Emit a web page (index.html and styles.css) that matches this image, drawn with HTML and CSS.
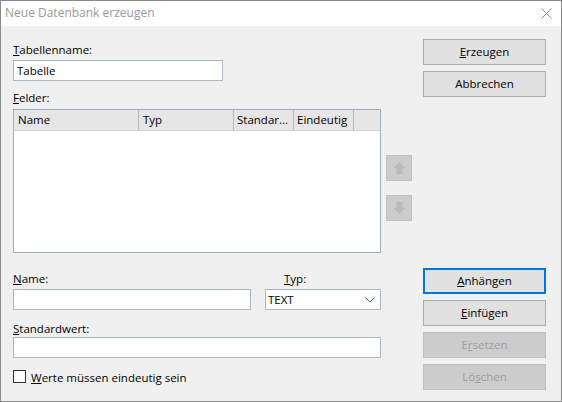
FILE: index.html
```html
<!DOCTYPE html>
<html>
<head>
<meta charset="utf-8">
<link rel="stylesheet" href="styles.css">
</head>
<body>
<div class="window">
  <div class="titlebar">
    <span class="title">Neue Datenbank erzeugen</span>
    <svg class="close" width="11" height="11" viewBox="0 0 11 11"><path d="M0.5 0.5 L10.5 10.5 M10.5 0.5 L0.5 10.5" stroke="#8c8c8c" stroke-width="1" fill="none"/></svg>
  </div>
  <div class="dialog">
    <div class="left">
      <div class="label"><u>T</u>abellenname:</div>
      <div class="input tabname">Tabelle</div>
      <div class="label felder"><u>F</u>elder:</div>
      <div class="list">
        <div class="list-head">
          <div class="col c-name">Name</div>
          <div class="col c-typ">Typ</div>
          <div class="col c-std">Standar...</div>
          <div class="col c-eind">Eindeutig</div>
        </div>
      </div>
      <div class="row name-row">
        <div class="name-col">
          <div class="label"><u>N</u>ame:</div>
          <div class="input"></div>
        </div>
        <div class="typ-col">
          <div class="label typ-label"><u>T</u>yp:</div>
          <div class="input combo"><span>TEXT</span>
            <svg width="10" height="6" viewBox="0 0 10 6"><path d="M0.5 0.5 L5 5 L9.5 0.5" stroke="#5a5a5a" stroke-width="1" fill="none"/></svg>
          </div>
        </div>
      </div>
      <div class="label std-label"><u>S</u>tandardwert:</div>
      <div class="input"></div>
      <div class="check-row">
        <span class="checkbox"></span>
        <span class="check-label"><u>W</u>erte müssen eindeutig sein</span>
      </div>
    </div>
    <div class="arrows">
      <div class="arrow-btn">
        <svg width="13" height="12" viewBox="0 0 13 12"><path d="M6.5 0 L12.5 6 L9.5 6 L9.5 12 L3.5 12 L3.5 6 L0.5 6 Z" fill="#bababa"/></svg>
      </div>
      <div class="arrow-btn">
        <svg width="13" height="12" viewBox="0 0 13 12"><path d="M6.5 12 L12.5 6 L9.5 6 L9.5 0 L3.5 0 L3.5 6 L0.5 6 Z" fill="#bababa"/></svg>
      </div>
    </div>
    <div class="right">
      <div class="btn"><u>E</u>rzeugen</div>
      <div class="btn">Abbrechen</div>
      <div class="spacer"></div>
      <div class="btn default"><u>A</u>nhängen</div>
      <div class="btn"><u>E</u>infügen</div>
      <div class="btn disabled">E<u>r</u>setzen</div>
      <div class="btn disabled">Lö<u>s</u>chen</div>
    </div>
  </div>
</div>
</body>
</html>
```
FILE: styles.css
```css
html, body {
  margin: 0;
  padding: 0;
  background: #f0f0f0;
}
body {
  font-family: "Segoe UI", "Open Sans", "Noto Sans", sans-serif;
  font-size: 11.5px;
  color: #000;
}
u {
  text-decoration: underline;
  text-underline-offset: 1px;
}
.window {
  width: 562px;
  height: 402px;
  box-sizing: border-box;
  border: 1px solid #8a8a8a;
  background: #f0f0f0;
  display: flex;
  flex-direction: column;
}
.titlebar {
  height: 25px;
  background: #fff;
  display: flex;
  align-items: center;
  justify-content: space-between;
  padding: 0 9px 0 4px;
  flex: none;
}
.title {
  color: #999;
  font-size: 12px;
  line-height: 15px;
  position: relative;
  top: -1px;
}
.close {
  margin-top: -1px;
}
.dialog {
  display: flex;
  padding-left: 12px;
  flex: 1;
}
.left {
  width: 368px;
  padding-top: 16px;
  display: flex;
  flex-direction: column;
}
.label {
  height: 15px;
  line-height: 15px;
  margin-bottom: 3px;
  white-space: nowrap;
}
.input {
  height: 21px;
  box-sizing: border-box;
  border: 1px solid #abb6c6;
  background: #fff;
  line-height: 19px;
  padding-left: 3px;
}
.tabname {
  width: 210px;
}
.felder {
  margin-top: 9px;
  margin-bottom: 4px;
}
.list {
  height: 144px;
  box-sizing: border-box;
  border: 1px solid #a3aebd;
  background: #fff;
}
.list-head {
  height: 21px;
  display: flex;
  background: #e6e6e6;
  border-bottom: 1px solid #d5d5d5;
  box-sizing: border-box;
}
.col {
  border-right: 1px solid #b8b8b8;
  line-height: 20px;
  padding-left: 4px;
  box-sizing: border-box;
  white-space: nowrap;
  overflow: hidden;
}
.c-name { width: 125px; }
.c-typ { width: 95px; }
.c-std { width: 60px; padding-left: 3px; }
.c-eind { width: 60px; padding-left: 3px; }
.row {
  display: flex;
}
.name-row {
  margin-top: 18px;
}
.name-col {
  width: 238px;
}
.typ-col {
  width: 116px;
  margin-left: 14px;
}
.typ-label {
  padding-left: 19px;
}
.combo {
  display: flex;
  align-items: center;
  justify-content: space-between;
  padding-right: 5px;
  padding-left: 2px;
}
.std-label {
  margin-top: 11px;
  margin-bottom: 1px;
}
.check-row {
  margin-top: 12px;
  display: flex;
  align-items: center;
  height: 13px;
}
.checkbox {
  width: 13px;
  height: 13px;
  box-sizing: border-box;
  border: 1px solid #333;
  background: #fff;
}
.check-label {
  margin-left: 5px;
  line-height: 15px;
  position: relative;
  top: 1px;
}
.arrows {
  margin-left: 5px;
  padding-top: 129px;
  display: flex;
  flex-direction: column;
  gap: 14px;
}
.arrow-btn {
  width: 26px;
  height: 26px;
  box-sizing: border-box;
  border: 1px solid #bfbfbf;
  background: #cccccc;
  display: flex;
  align-items: center;
  justify-content: center;
}
.right {
  margin-left: 11px;
  width: 123px;
  padding-top: 13px;
  display: flex;
  flex-direction: column;
  gap: 6px;
}
.btn {
  height: 26px;
  box-sizing: border-box;
  border: 1px solid #adadad;
  background: #e1e1e1;
  text-align: center;
  line-height: 23px;
  white-space: nowrap;
}
.btn.default {
  border: 2px solid #0078d7;
  line-height: 21px;
}
.btn.disabled {
  background: #cccccc;
  border-color: #bfbfbf;
  color: #9c9c9c;
}
.spacer {
  height: 159px;
}
```
